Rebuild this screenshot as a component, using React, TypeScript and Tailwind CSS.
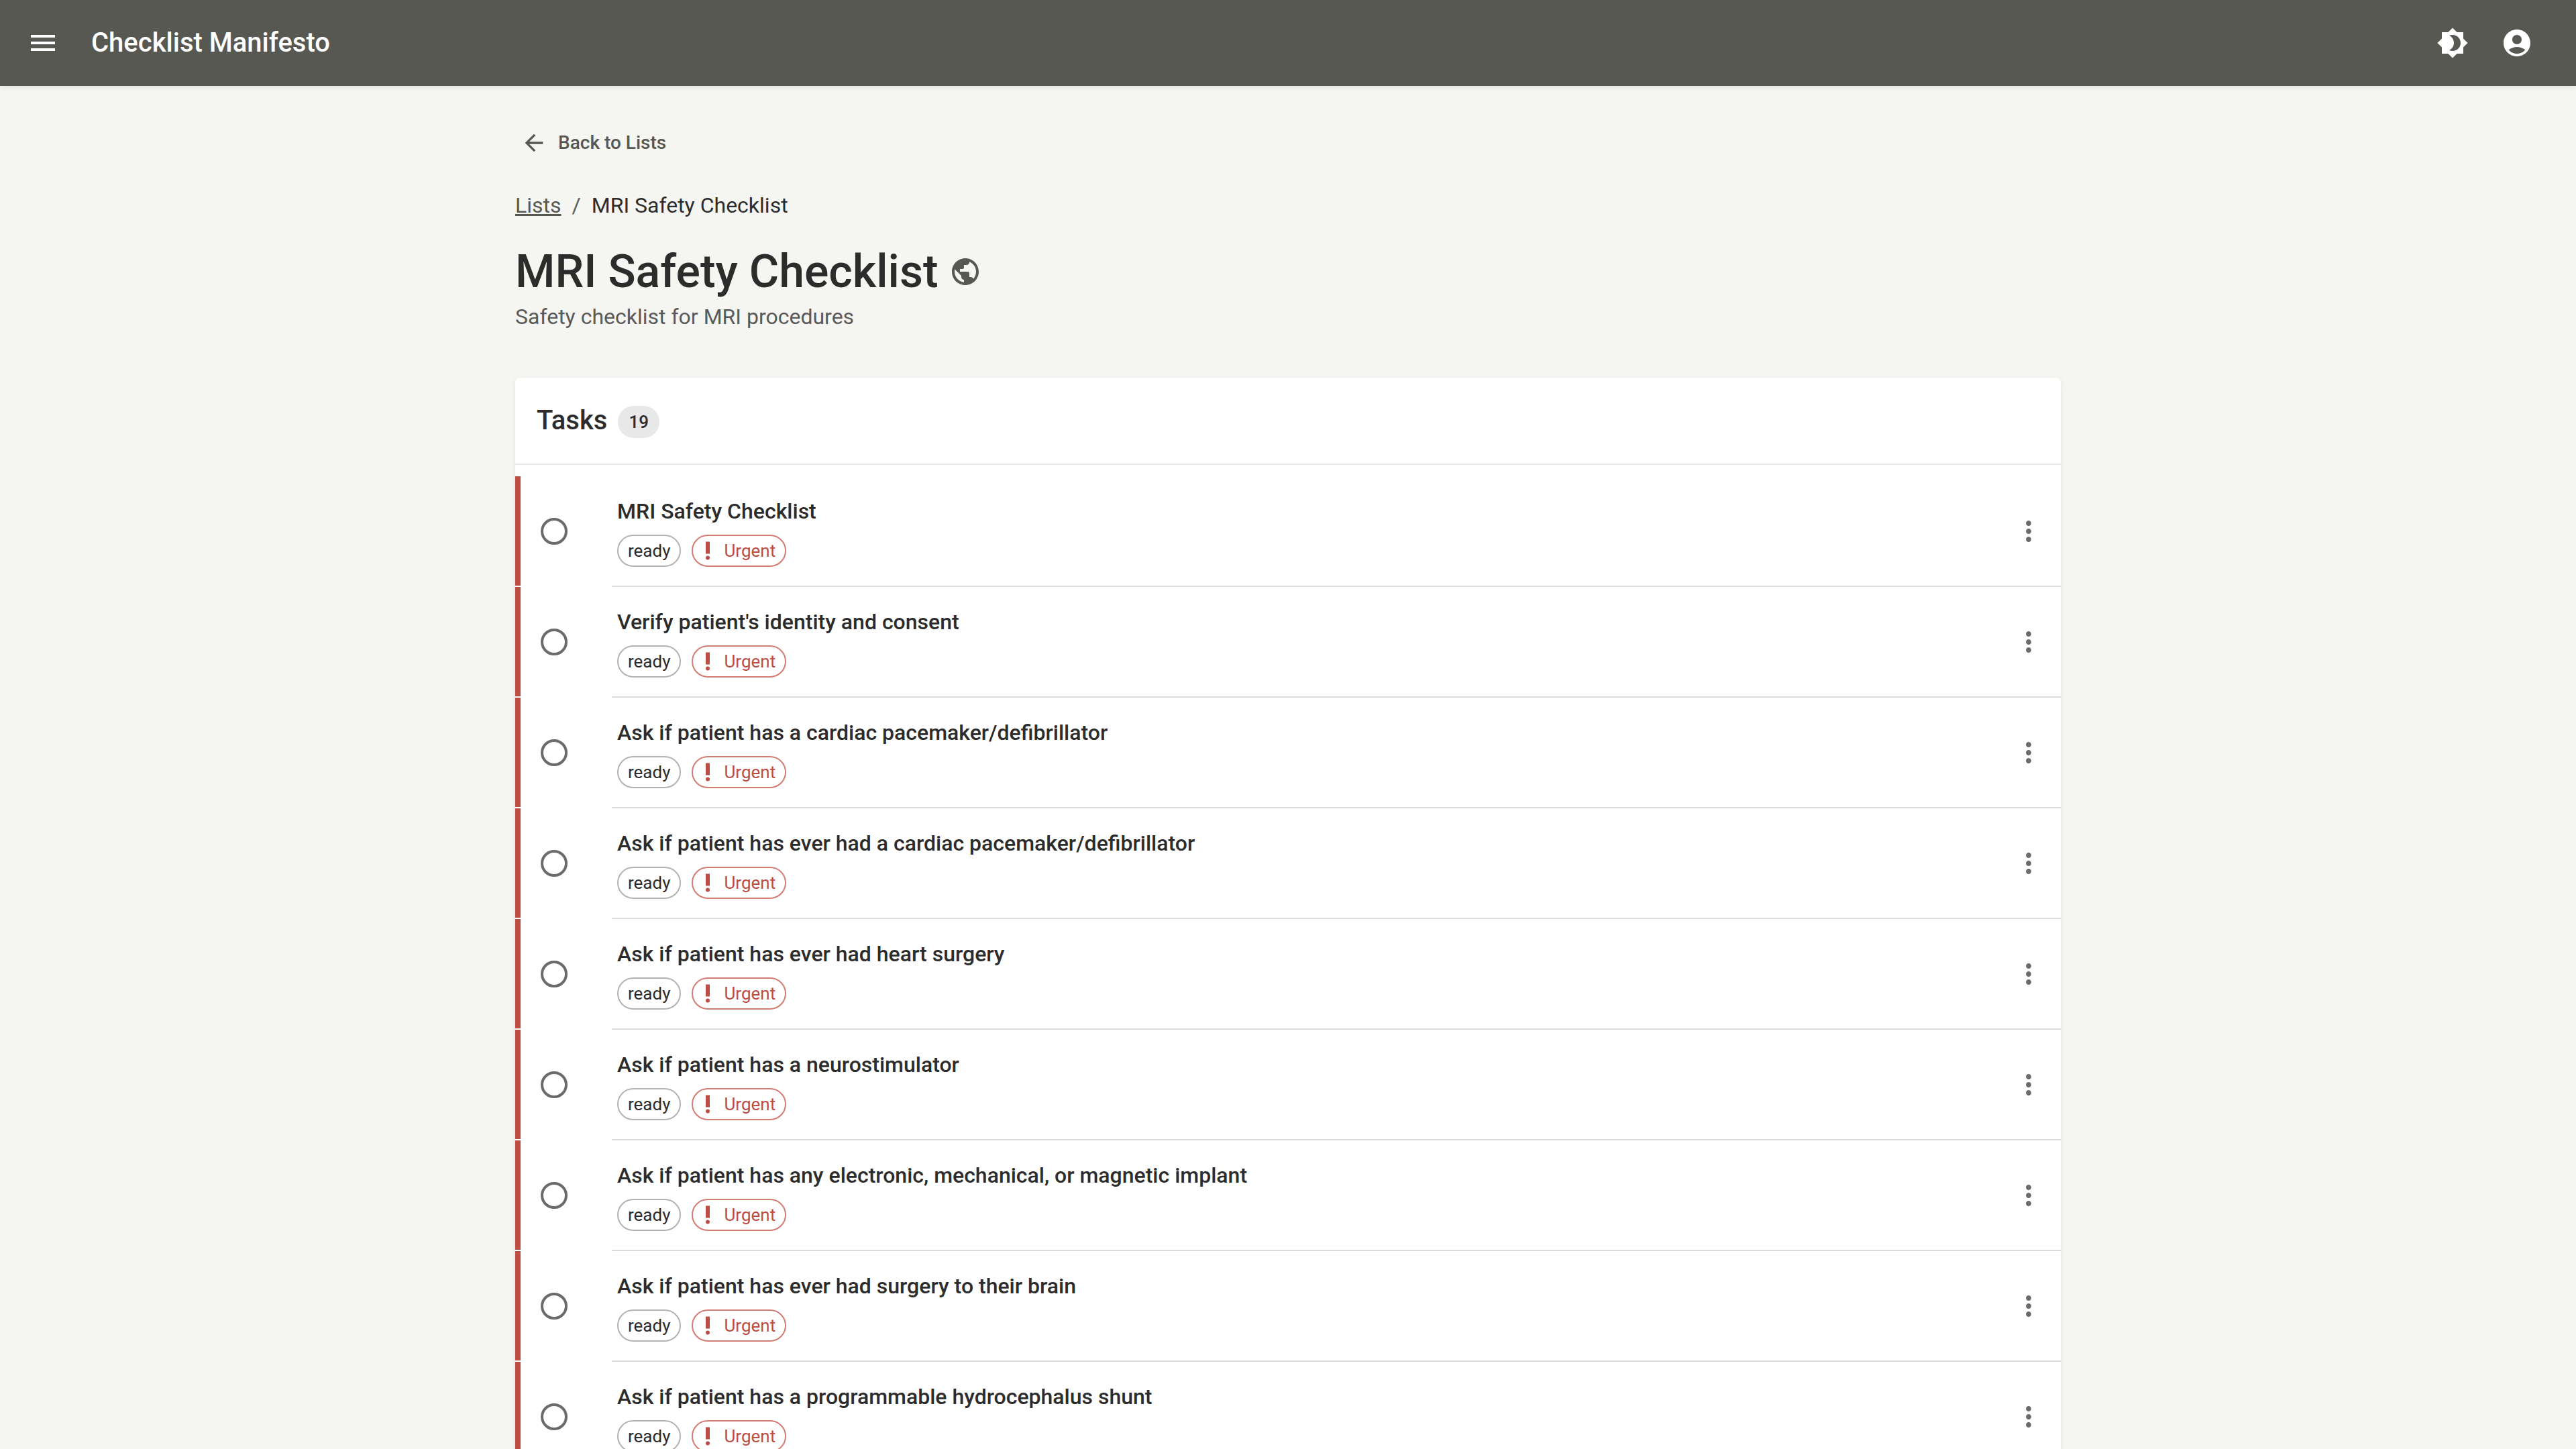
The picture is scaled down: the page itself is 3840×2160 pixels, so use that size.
import type { ReactNode } from 'react';

const TASKS: string[] = [
  'MRI Safety Checklist',
  "Verify patient's identity and consent",
  'Ask if patient has a cardiac pacemaker/defibrillator',
  'Ask if patient has ever had a cardiac pacemaker/defibrillator',
  'Ask if patient has ever had heart surgery',
  'Ask if patient has a neurostimulator',
  'Ask if patient has any electronic, mechanical, or magnetic implant',
  'Ask if patient has ever had surgery to their brain',
  'Ask if patient has a programmable hydrocephalus shunt',
];

const TASK_COUNT = 19;

const ICONS = {
  menu: 'M3 18h18v-2H3zm0-5h18v-2H3zm0-7v2h18V6z',
  theme:
    'M20 8.69V4h-4.69L12 .69 8.69 4H4v4.69L.69 12 4 15.31V20h4.69L12 23.31 15.31 20H20v-4.69L23.31 12zM12 18c-.89 0-1.74-.2-2.5-.55C11.56 16.5 13 14.42 13 12s-1.44-4.5-3.5-5.45C10.26 6.2 11.11 6 12 6c3.31 0 6 2.69 6 6s-2.69 6-6 6',
  account:
    'M12 2C6.48 2 2 6.48 2 12s4.48 10 10 10 10-4.48 10-10S17.52 2 12 2m0 4c1.93 0 3.5 1.57 3.5 3.5S13.93 13 12 13s-3.5-1.57-3.5-3.5S10.07 6 12 6m0 14c-2.03 0-4.43-.82-6.14-2.88C7.55 15.8 9.68 15 12 15s4.45.8 6.14 2.12C16.43 19.18 14.03 20 12 20',
  back: 'M20 11H7.83l5.59-5.59L12 4l-8 8 8 8 1.41-1.41L7.83 13H20z',
  globe:
    'M12 2C6.48 2 2 6.48 2 12s4.48 10 10 10 10-4.48 10-10S17.52 2 12 2m-1 17.93c-3.95-.49-7-3.85-7-7.93 0-.62.08-1.21.21-1.79L9 15v1c0 1.1.9 2 2 2zm6.9-2.54c-.26-.81-1-1.39-1.9-1.39h-1v-3c0-.55-.45-1-1-1H8v-2h2c.55 0 1-.45 1-1V7h2c1.1 0 2-.9 2-2v-.41c2.93 1.19 5 4.06 5 7.41 0 2.08-.8 3.97-2.1 5.39',
  more: 'M12 8c1.1 0 2-.9 2-2s-.9-2-2-2-2 .9-2 2 .9 2 2 2m0 2c-1.1 0-2 .9-2 2s.9 2 2 2 2-.9 2-2-.9-2-2-2m0 6c-1.1 0-2 .9-2 2s.9 2 2 2 2-.9 2-2-.9-2-2-2',
  urgent: 'M10 3h4v12h-4zM12 17a2 2 0 1 0 0 4a2 2 0 1 0 0-4z',
};

function Icon({ path, className }: { path: string; className: string }) {
  return (
    <svg viewBox="0 0 24 24" fill="currentColor" aria-hidden="true" className={className}>
      <path d={path} />
    </svg>
  );
}

function IconButton({ label, children }: { label: string; children: ReactNode }) {
  return (
    <button type="button" aria-label={label} className="flex size-20 shrink-0 items-center justify-center rounded-full">
      {children}
    </button>
  );
}

function TopBar() {
  return (
    <header className="z-10 flex h-32 shrink-0 items-center bg-[#575852] pr-12 pl-6 text-white shadow-[0_2px_8px_rgba(0,0,0,0.08)]">
      <IconButton label="Open menu">
        <Icon path={ICONS.menu} className="size-12" />
      </IconButton>
      <div className="ml-8 flex-1 text-[40px] leading-[64px] font-medium">Checklist Manifesto</div>
      <div className="flex gap-4">
        <IconButton label="Toggle theme">
          <Icon path={ICONS.theme} className="size-12" />
        </IconButton>
        <IconButton label="Account">
          <Icon path={ICONS.account} className="size-12" />
        </IconButton>
      </div>
    </header>
  );
}

function TaskRow({ title, divided }: { title: string; divided: boolean }) {
  return (
    <li>
      <div className="flex items-center border-l-8 border-[#bd4d43] py-7 pr-2">
        <label className="ml-2 flex size-[84px] shrink-0 items-center justify-center">
          <input
            type="checkbox"
            aria-label={title}
            className="size-10 appearance-none rounded-full border-4 border-[#6b6b6b]"
          />
        </label>
        <div className="ml-[52px] min-w-0 flex-1">
          <p className="text-[32px] leading-[48px] font-medium">{title}</p>
          <div className="mt-[11px] flex gap-4 text-[26px] leading-[44px]">
            <span className="rounded-full border-2 border-[#b3b3b3] px-3.5">ready</span>
            <span className="flex items-center gap-1.5 rounded-full border-2 border-[#d47b73] pr-3.5 pl-1 text-[#bd4d43]">
              <Icon path={ICONS.urgent} className="size-9" />
              Urgent
            </span>
          </div>
        </div>
        <button
          type="button"
          aria-label={`Options for ${title}`}
          className="flex size-20 shrink-0 items-center justify-center rounded-full text-[#6b6b6b]"
        >
          <Icon path={ICONS.more} className="size-12" />
        </button>
      </div>
      {divided && <div className="ml-36 h-0.5 bg-[#dbdbdb]" />}
    </li>
  );
}

export default function App() {
  return (
    <div className="flex h-screen flex-col overflow-hidden bg-[#f5f5f1] font-[Roboto,sans-serif] text-[#2c2c2c]">
      <TopBar />
      <main className="mx-auto w-full max-w-[2400px] px-12 pt-12">
        <button
          type="button"
          className="flex items-center gap-4 py-3 pr-4 pl-2 text-[28px] leading-[50px] font-medium text-[#575852]"
        >
          <Icon path={ICONS.back} className="size-10" />
          Back to Lists
        </button>

        <nav aria-label="Breadcrumb" className="mt-8">
          <ol className="flex gap-4 text-[32px] leading-[48px] text-[#5a5a5a]">
            <li>
              <a href="#lists" className="text-[#575852] underline">
                Lists
              </a>
            </li>
            <li aria-hidden="true">/</li>
            <li className="text-[#2c2c2c]" aria-current="page">
              MRI Safety Checklist
            </li>
          </ol>
        </nav>

        <div className="mt-8 flex items-center gap-4">
          <h1 className="text-[68px] leading-[86px] font-medium">MRI Safety Checklist</h1>
          <Icon path={ICONS.globe} className="size-12 text-[#575852]" />
        </div>
        <p className="text-[32px] leading-[48px] text-[#5a5a5a]">Safety checklist for MRI procedures</p>

        <section className="mt-[67px] rounded-lg bg-white shadow-[0_2px_8px_rgba(0,0,0,0.08)]">
          <h2 className="border-b-2 border-[#e8e8e8] p-8 text-[40px] leading-[64px] font-medium">
            Tasks
            <span className="ml-4 inline-block rounded-full bg-[#e8e8e8] px-4 align-middle text-[26px] leading-[48px]">
              {TASK_COUNT}
            </span>
          </h2>
          <ul className="py-[17px]">
            {TASKS.map((title, i) => (
              <TaskRow key={title} title={title} divided={i < TASKS.length - 1} />
            ))}
          </ul>
        </section>
      </main>
    </div>
  );
}
